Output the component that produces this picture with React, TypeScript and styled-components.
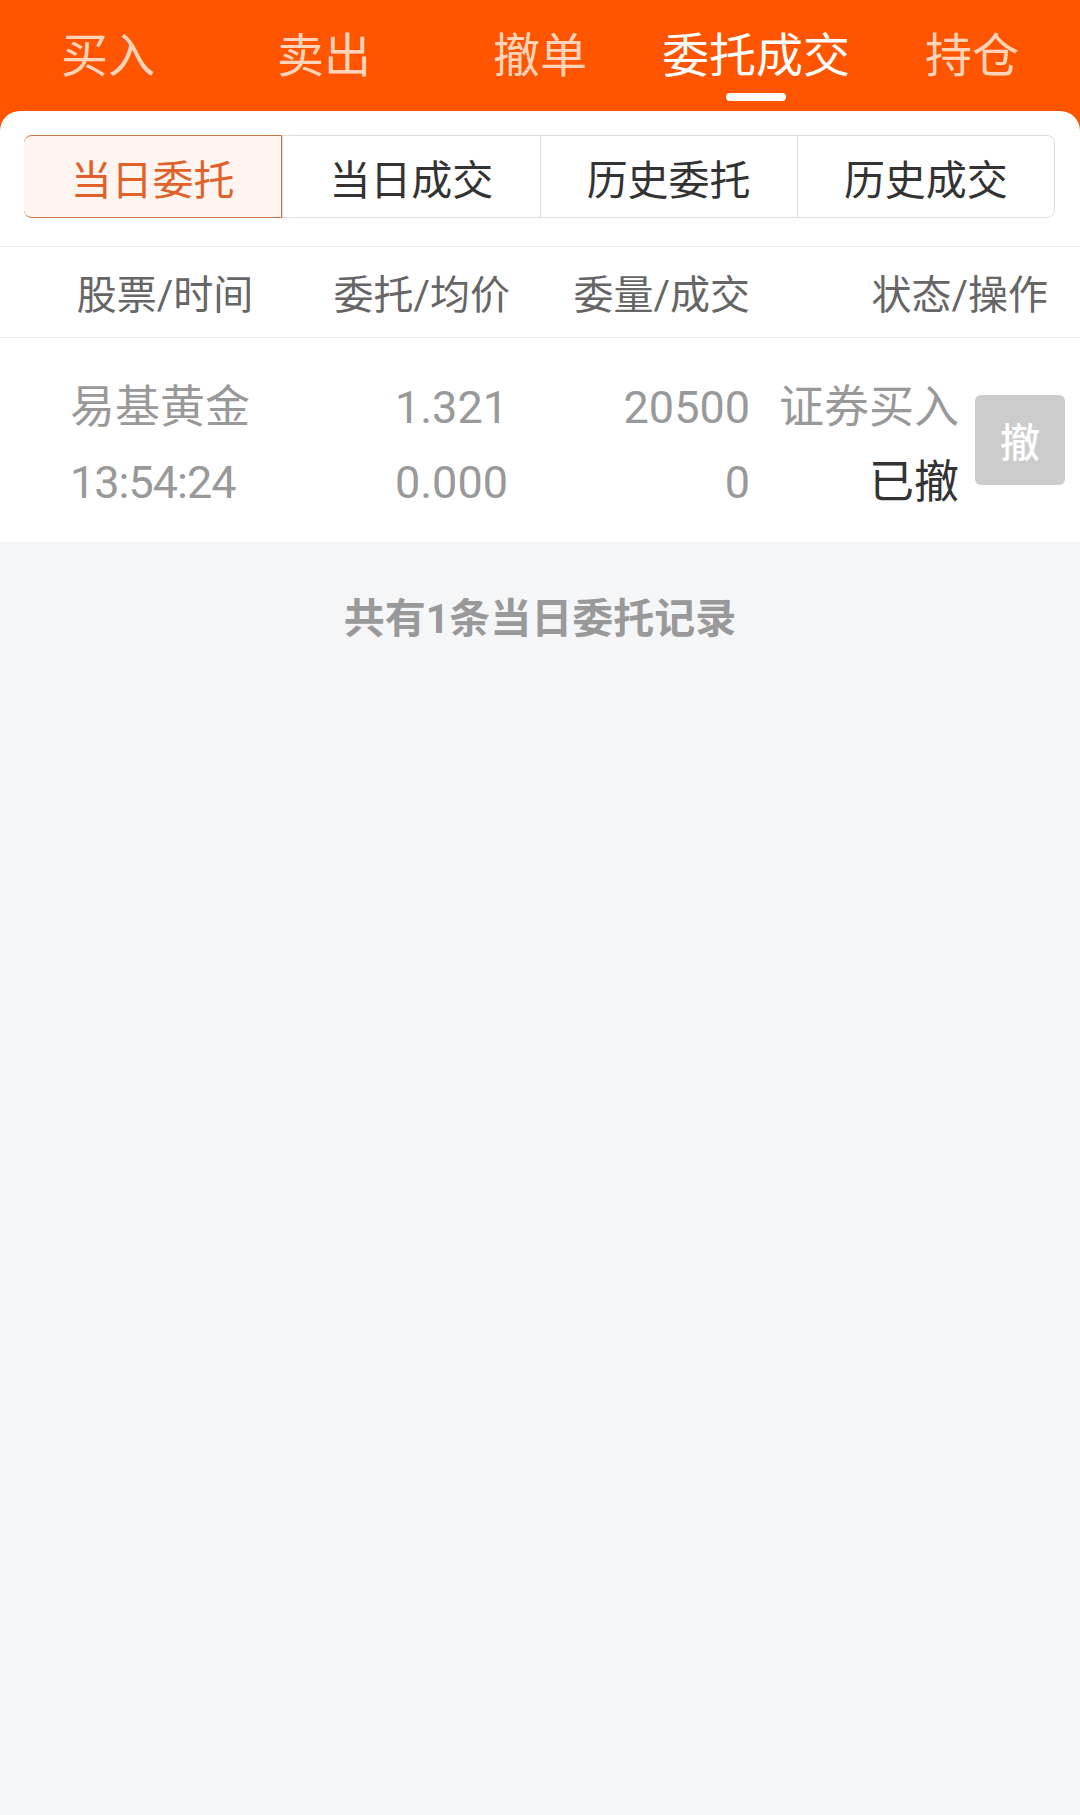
import React, { useState } from 'react'
import styled, { createGlobalStyle } from 'styled-components'

const GlobalStyle = createGlobalStyle`
  html, body {
    margin: 0;
    padding: 0;
    background: #f5f6f8;
  }
  body {
    font-family: Roboto, "Noto Sans CJK SC", "Noto Sans", sans-serif;
  }
`

const Page = styled.div`
  min-height: 1815px;
  background: #f5f6f8;
`

const Top = styled.div`
  background: #ff5500;
`

const TabBar = styled.div`
  display: grid;
  grid-template-columns: repeat(5, 1fr);
  height: 111px;
`

const Tab = styled.div<{ $active?: boolean }>`
  position: relative;
  display: flex;
  justify-content: center;
  padding-top: 28px;
  font-size: 47px;
  line-height: 56px;
  color: ${p => (p.$active ? '#ffffff' : '#ffd4bb')};
  cursor: pointer;
`

const Indicator = styled.span`
  position: absolute;
  left: 50%;
  top: 93px;
  width: 60px;
  height: 8px;
  margin-left: -30px;
  border-radius: 4px;
  background: #ffffff;
`

const Panel = styled.div`
  background: #ffffff;
  border-radius: 20px 20px 0 0;
  padding-top: 24px;
`

const Segmented = styled.div`
  display: grid;
  grid-template-columns: repeat(4, 1fr);
  margin: 0 25px 0 24px;
  height: 83px;
  border: 1px solid #dddddd;
  border-radius: 8px;
  box-sizing: border-box;
`

const Segment = styled.div<{ $active?: boolean }>`
  display: flex;
  align-items: center;
  justify-content: center;
  font-size: 41px;
  color: ${p => (p.$active ? '#e0612a' : '#333333')};
  background: ${p => (p.$active ? '#fff5f0' : 'transparent')};
  border-left: 1px solid #dddddd;
  margin: -1px 0;
  &:first-child {
    border-left: none;
  }
  ${p =>
    p.$active &&
    `
    border: 1px solid #c9784a;
    margin: -1px 0 -1px -1px;
    border-radius: 8px 0 0 8px;
  `}
`

const HeadRow = styled.div`
  display: grid;
  grid-template-columns: 330px 180px 240px 1fr;
  height: 92px;
  margin-top: 28px;
  border-top: 1px solid #f0f0f0;
  border-bottom: 1px solid #ececec;
  box-sizing: border-box;
  align-items: center;
  font-size: 40px;
  color: #666666;
`

const HeadCell = styled.div<{ $align: 'center' | 'right' }>`
  text-align: ${p => p.$align};
  &:last-child {
    padding-right: 32px;
  }
`

const DataRow = styled.div`
  display: grid;
  grid-template-columns: 330px 178px 242px 1fr;
  height: 204px;
  padding-top: 10px;
  box-sizing: border-box;
  align-items: center;
  font-size: 45px;
  line-height: 75px;
  color: #999999;
`

const Cell = styled.div<{ $align?: 'left' | 'right' }>`
  display: flex;
  flex-direction: column;
  align-items: ${p => (p.$align === 'right' ? 'flex-end' : 'flex-start')};
  padding-left: ${p => (p.$align === 'right' ? '0' : '70px')};
`

const Time = styled.span`
  letter-spacing: -1px;
`

const StatusCell = styled.div`
  display: flex;
  align-items: center;
  justify-content: flex-end;
  gap: 16px;
  padding-right: 15px;
`

const Status = styled.div`
  display: flex;
  flex-direction: column;
  align-items: flex-end;
`

const Done = styled.span`
  color: #333333;
`

const CancelButton = styled.button`
  width: 90px;
  height: 90px;
  margin-top: -10px;
  border: none;
  border-radius: 6px;
  background: #cccccc;
  color: #ffffff;
  font-family: inherit;
  font-size: 40px;
  font-weight: 500;
  padding: 0;
`

const Footer = styled.div`
  padding-top: 54px;
  text-align: center;
  font-size: 41px;
  line-height: 46px;
  font-weight: 700;
  color: #999999;
`

const tabs = ['买入', '卖出', '撤单', '委托成交', '持仓']
const segments = ['当日委托', '当日成交', '历史委托', '历史成交']

export default function App() {
  const [tab, setTab] = useState(3)
  const [seg, setSeg] = useState(0)

  return (
    <Page>
      <GlobalStyle />
      <Top>
        <TabBar>
          {tabs.map((t, i) => (
            <Tab key={t} $active={i === tab} onClick={() => setTab(i)}>
              {t}
              {i === tab && <Indicator />}
            </Tab>
          ))}
        </TabBar>
        <Panel>
          <Segmented>
            {segments.map((s, i) => (
              <Segment key={s} $active={i === seg} onClick={() => setSeg(i)}>
                {s}
              </Segment>
            ))}
          </Segmented>
          <HeadRow>
            <HeadCell $align="center">股票/时间</HeadCell>
            <HeadCell $align="right">委托/均价</HeadCell>
            <HeadCell $align="right">委量/成交</HeadCell>
            <HeadCell $align="right">状态/操作</HeadCell>
          </HeadRow>
          <DataRow>
            <Cell>
              <span>易基黄金</span>
              <Time>13:54:24</Time>
            </Cell>
            <Cell $align="right">
              <span>1.321</span>
              <span>0.000</span>
            </Cell>
            <Cell $align="right">
              <span>20500</span>
              <span>0</span>
            </Cell>
            <StatusCell>
              <Status>
                <span>证券买入</span>
                <Done>已撤</Done>
              </Status>
              <CancelButton>撤</CancelButton>
            </StatusCell>
          </DataRow>
        </Panel>
      </Top>
      <Footer>共有1条当日委托记录</Footer>
    </Page>
  )
}
